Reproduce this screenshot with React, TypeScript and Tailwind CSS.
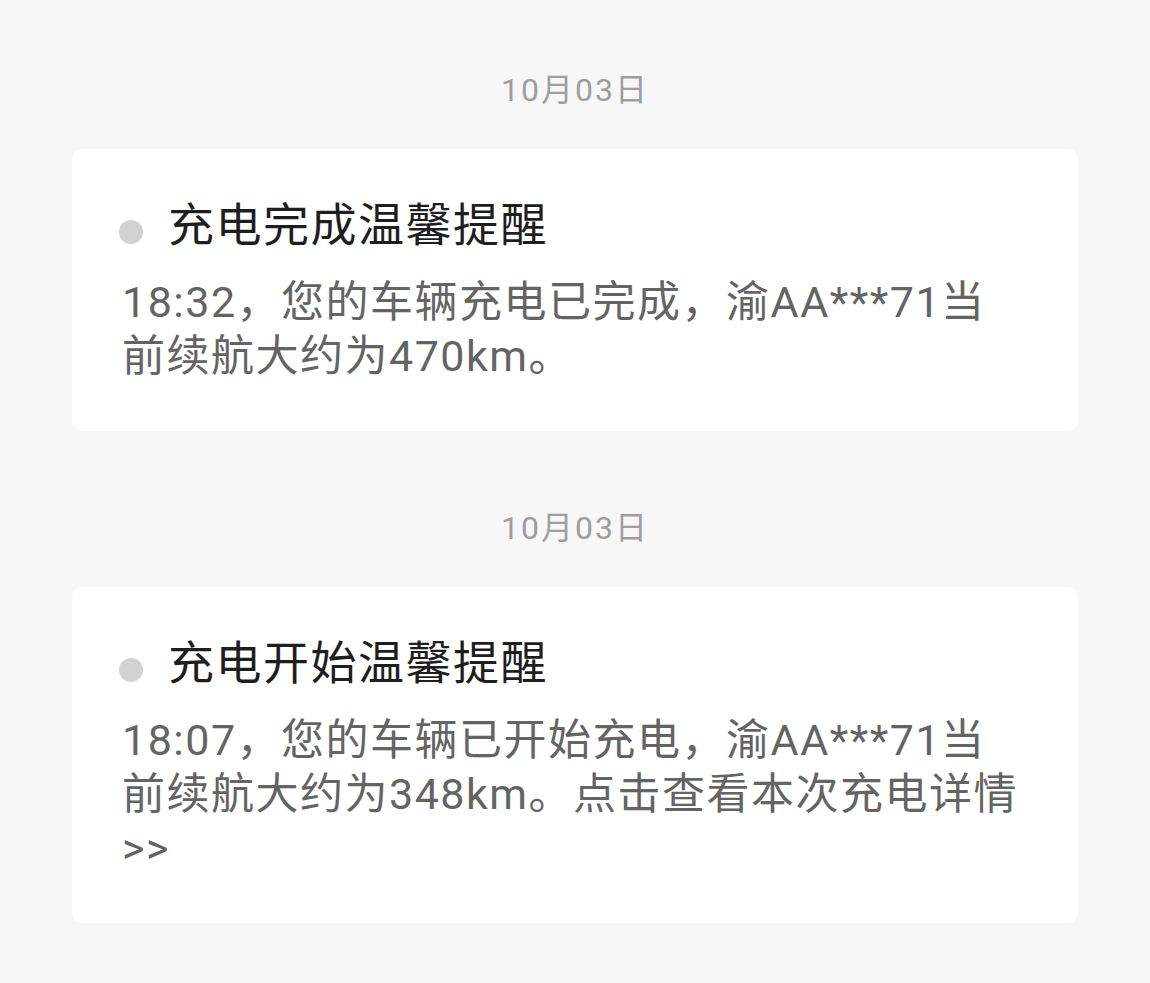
const font = {
  fontFamily: '"Roboto", "Noto Sans CJK SC", sans-serif',
};

type Notice = {
  date: string;
  title: string;
  lines: string[];
};

const notices: Notice[] = [
  {
    date: "10月03日",
    title: "充电完成温馨提醒",
    lines: ["18:32，您的车辆充电已完成，渝AA***71当", "前续航大约为470km。"],
  },
  {
    date: "10月03日",
    title: "充电开始温馨提醒",
    lines: [
      "18:07，您的车辆已开始充电，渝AA***71当",
      "前续航大约为348km。点击查看本次充电详情",
      ">>",
    ],
  },
];

const NoticeCard = ({ notice }: { notice: Notice }) => {
  return (
    <div className="flex flex-col">
      {/* date */}
      <div className="h-[40px] mb-[39px] flex items-center justify-center text-[32px] leading-[40px] text-[#9e9e9e] tracking-[2px]">
        {notice.date}
      </div>

      {/* card */}
      <div className="bg-white rounded-[10px] px-[50px] pt-[48px] pb-[48px]">
        <div className="flex items-center h-[56px]">
          <span className="w-[24px] h-[24px] rounded-full bg-[#d2d2d2] shrink-0 -ml-[3px] translate-y-[7px]" />
          <h2 className="ml-[25px] text-[46px] leading-[56px] font-normal text-[#1e1e1e] tracking-[1.5px]">
            {notice.title}
          </h2>
        </div>
        <p className="mt-[22px] text-[43px] leading-[54px] text-[#646464] tracking-[1.5px] whitespace-nowrap">
          {notice.lines.map((line, i) => (
            <span key={i} className="block">
              {line}
            </span>
          ))}
        </p>
      </div>
    </div>
  );
};

const App = () => {
  return (
    <div className="min-h-[983px] w-full bg-[#f7f7f7]" style={font}>
      <div className="flex flex-col gap-[77px] pt-[70px] px-[72px] w-[1150px]">
        {notices.map((n, i) => (
          <NoticeCard key={i} notice={n} />
        ))}
      </div>
    </div>
  );
};

export default App;
